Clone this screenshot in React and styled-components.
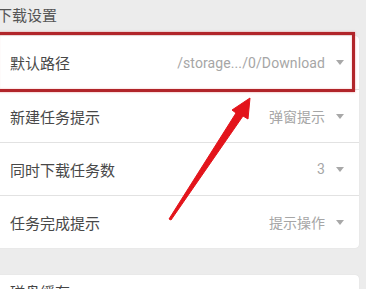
import React from 'react';
import styled, { createGlobalStyle } from 'styled-components';

const GlobalStyle = createGlobalStyle`
  html, body {
    margin: 0;
    padding: 0;
    background: #ececec;
    overflow: hidden;
  }
  body {
    font-family: "Noto Sans CJK SC", "Roboto", "Liberation Sans", sans-serif;
  }
`;

const Page = styled.div`
  position: relative;
  width: 366px;
  height: 289px;
  overflow: hidden;
  background: #ececec;
`;

const SectionTitle = styled.div`
  height: 36px;
  line-height: 30px;
  margin-left: -3px;
  font-size: 15px;
  color: #555;
`;

const Card = styled.div`
  margin-left: -6px;
  width: 365px;
  background: #fff;
  border-radius: 4px;
  box-shadow: 0 0 1px rgba(0, 0, 0, 0.12);
`;

const Row = styled.div`
  height: 53px;
  display: flex;
  align-items: center;
  padding: 0 12px 0 16px;
  border-top: ${p => (p.$first ? 'none' : '1px solid #e2e2e2')};
  box-sizing: border-box;
`;

const Label = styled.span`
  flex: 1;
  font-size: 15px;
  color: #484848;
`;

const Value = styled.span`
  font-size: 14px;
  color: #a6a6a6;
  font-family: ${p => (p.$latin ? '"Roboto", "Liberation Sans", sans-serif' : 'inherit')};
  letter-spacing: ${p => (p.$latin ? '0.1px' : '0')};
`;

const Caret = styled.span`
  width: 0;
  height: 0;
  margin-left: 11px;
  margin-right: 3px;
  border-left: 4.5px solid transparent;
  border-right: 4.5px solid transparent;
  border-top: 5px solid #a8a8a8;
`;

const NextCard = styled(Card)`
  margin-top: 27px;
  height: 40px;
  padding: 6px 0 0 16px;
  box-sizing: border-box;
  font-size: 15px;
  color: #444;
`;

const Highlight = styled.div`
  position: absolute;
  left: -4px;
  top: 32px;
  width: 359px;
  height: 60px;
  box-sizing: border-box;
  border: 3px solid #b1252a;
  box-shadow: 0 0 2px rgba(220, 60, 60, 0.5), inset 0 0 2px rgba(220, 60, 60, 0.4);
  pointer-events: none;
`;

const Pointer = styled.svg`
  position: absolute;
  left: 0;
  top: 0;
  pointer-events: none;
`;

const rows = [
  { label: '默认路径', value: '/storage.../0/Download', latin: true },
  { label: '新建任务提示', value: '弹窗提示' },
  { label: '同时下载任务数', value: '3', latin: true },
  { label: '任务完成提示', value: '提示操作' },
];

export default function App() {
  return (
    <Page>
      <GlobalStyle />
      <SectionTitle>下载设置</SectionTitle>
      <Card>
        {rows.map((r, i) => (
          <Row key={r.label} $first={i === 0}>
            <Label>{r.label}</Label>
            <Value $latin={r.latin}>{r.value}</Value>
            <Caret />
          </Row>
        ))}
      </Card>
      <NextCard>磁盘缓存</NextCard>
      <Highlight />
      <Pointer width="366" height="289" viewBox="0 0 366 289">
        <path
          d="M169 219 L236 113 L232 110 L250 98 L248 119 L243 116 L171 220 Z"
          fill="#e3141b"
          stroke="#e3141b"
          strokeWidth="1"
          strokeLinejoin="round"
        />
      </Pointer>
    </Page>
  );
}
